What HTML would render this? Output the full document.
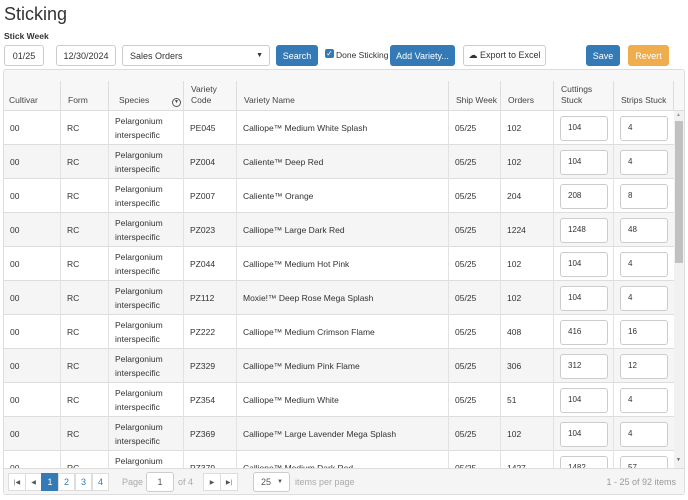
<!DOCTYPE html>
<html><head><style>
*{box-sizing:border-box;margin:0;padding:0}
body{width:688px;height:500px;background:#fff;font-family:"Liberation Sans",sans-serif;color:#333;position:relative;overflow:hidden;font-size:9px}
.a{position:absolute}
.btn{position:absolute;height:21px;border-radius:3px;font-size:9px;display:flex;align-items:center;justify-content:center}
.in{position:absolute;height:21px;border:1px solid #ccc;border-radius:3px;font-size:9px;display:flex;align-items:center}
.grid{position:absolute;left:3px;top:69px;width:682px;height:426px;border:1px solid #ddd;border-radius:3px;overflow:hidden}
.hd{position:absolute;left:0;top:0;width:680px;height:41px;background:#f7f7f7;border-bottom:1px solid #ddd}
.hc{position:absolute;top:11px;height:30px;border-left:1px solid #ddd;padding-left:7px;font-size:8.5px;color:#444;display:flex;align-items:flex-end;padding-bottom:5px;line-height:11px}
.row{position:absolute;left:0;width:670px;height:34px;border-bottom:1px solid #ddd}
.c{position:absolute;top:0;height:34px;border-left:1px solid #e2e2e2;padding-left:6px;display:flex;align-items:center;font-size:8.5px;line-height:14px}
.box{width:48px;height:25px;border:1px solid #ccc;border-radius:3px;background:#fff;font-size:8px;display:flex;align-items:center;padding-left:7px}
.pg{position:absolute;left:0;top:398px;width:680px;height:27px;background:#f5f5f5;border-top:1px solid #ddd}
.pb{position:absolute;top:4px;height:18px;border:1px solid #ddd;background:#fff;font-size:9px;color:#555;display:flex;align-items:center;justify-content:center}
</style></head><body>
<div class="a" style="left:4px;top:4px;font-size:18px;color:#333">Sticking</div>
<div class="a" style="left:4px;top:31px;font-size:8.5px;font-weight:bold">Stick Week</div>
<div class="in" style="left:4px;top:45px;width:40px;justify-content:center">01/25</div>
<div class="in" style="left:56px;top:45px;width:60px;justify-content:center">12/30/2024</div>
<div class="in" style="left:122px;top:45px;width:148px;padding-left:7px">Sales Orders<span style="position:absolute;right:6px;font-size:7px">▼</span></div>
<div class="btn" style="left:276px;top:45px;width:42px;background:#337ab7;color:#fff">Search</div>
<div class="a" style="left:325px;top:49px;width:9px;height:9px;background:#337ab7;border-radius:2px;color:#fff;font-size:8px;line-height:9px;text-align:center">✓</div>
<div class="a" style="left:336px;top:50px;font-size:8.5px">Done Sticking</div>
<div class="btn" style="left:390px;top:45px;width:65px;background:#337ab7;color:#fff">Add Variety...</div>
<div class="btn" style="left:463px;top:45px;width:83px;border:1px solid #ccc;background:#fff;color:#333">☁ Export to Excel</div>
<div class="btn" style="left:586px;top:45px;width:34px;background:#337ab7;color:#fff">Save</div>
<div class="btn" style="left:628px;top:45px;width:41px;background:#f0ad4e;color:#fff">Revert</div>
<div class="grid">
<div class="hd">
<div class="hc" style="left:-1px;width:58px;border-left:none;padding-left:6px">Cultivar</div>
<div class="hc" style="left:56px;width:48px">Form</div>
<div class="hc" style="left:104px;width:75px;padding-left:10px">Species<span style="position:absolute;right:2px;bottom:4px;width:9px;height:9px;border:1px solid #555;border-radius:50%;font-size:5px;line-height:7px;text-align:center">▼</span></div>
<div class="hc" style="left:179px;width:53px">Variety<br>Code</div>
<div class="hc" style="left:232px;width:212px">Variety Name</div>
<div class="hc" style="left:444px;width:52px">Ship Week</div>
<div class="hc" style="left:496px;width:53px">Orders</div>
<div class="hc" style="left:549px;width:60px">Cuttings<br>Stuck</div>
<div class="hc" style="left:609px;width:60px">Strips Stuck</div>
<div class="hc" style="left:669px;width:11px"></div>
</div>
<div id="rows"></div>
<div class="a" style="left:670px;top:41px;width:10px;height:357px;background:#f1f1f1"><div class="a" style="left:1px;top:10px;width:8px;height:142px;background:#c1c1c1"></div><div class="a" style="left:2px;top:346px;font-size:5px;color:#666">▼</div><div class="a" style="left:2px;top:1px;font-size:5px;color:#999">▲</div></div>
<div class="pg">
<div class="pb" style="left:4px;width:18px;font-size:6px">|◀</div>
<div class="pb" style="left:21px;width:17px;font-size:6px">◀</div>
<div class="pb" style="left:37px;width:18px;background:#337ab7;color:#fff;border-color:#337ab7">1</div>
<div class="pb" style="left:54px;width:17px;color:#337ab7">2</div>
<div class="pb" style="left:71px;width:17px;color:#337ab7">3</div>
<div class="pb" style="left:88px;width:17px;color:#337ab7">4</div>
<div class="a" style="left:118px;top:8px;color:#aaa">Page</div>
<div class="pb" style="left:142px;width:28px;top:3px;height:20px;border-color:#ccc;border-radius:3px">1</div>
<div class="a" style="left:174px;top:8px;color:#aaa">of 4</div>
<div class="pb" style="left:199px;width:18px;font-size:6px">▶</div>
<div class="pb" style="left:216px;width:18px;font-size:6px">▶|</div>
<div class="pb" style="left:249px;width:37px;top:3px;height:20px;border-color:#ccc;border-radius:3px;justify-content:flex-start;padding-left:7px">25<span style="position:absolute;right:6px;font-size:6px">▼</span></div>
<div class="a" style="left:291px;top:8px;color:#aaa">items per page</div>
<div class="a" style="right:8px;top:8px;color:#999">1 - 25 of 92 items</div>
</div>
</div>
<script>
var d=[["PE045","Calliope™ Medium White Splash","102","104","4"],["PZ004","Caliente™ Deep Red","102","104","4"],["PZ007","Caliente™ Orange","204","208","8"],["PZ023","Calliope™ Large Dark Red","1224","1248","48"],["PZ044","Calliope™ Medium Hot Pink","102","104","4"],["PZ112","Moxie!™ Deep Rose Mega Splash","102","104","4"],["PZ222","Calliope™ Medium Crimson Flame","408","416","16"],["PZ329","Calliope™ Medium Pink Flame","306","312","12"],["PZ354","Calliope™ Medium White","51","104","4"],["PZ369","Calliope™ Large Lavender Mega Splash","102","104","4"],["PZ379","Calliope™ Medium Dark Red","1427","1482","57"]];
var h="";
d.forEach(function(r,i){
h+='<div class="row" style="top:'+(41+i*34)+'px;background:'+(i%2?'#f5f5f5':'#fff')+'">'+
'<div class="c" style="left:0;width:56px;border-left:none">00</div>'+
'<div class="c" style="left:56px;width:48px">RC</div>'+
'<div class="c" style="left:104px;width:75px">Pelargonium<br>interspecific</div>'+
'<div class="c" style="left:179px;width:53px">'+r[0]+'</div>'+
'<div class="c" style="left:232px;width:212px">'+r[1]+'</div>'+
'<div class="c" style="left:444px;width:52px">05/25</div>'+
'<div class="c" style="left:496px;width:53px">'+r[2]+'</div>'+
'<div class="c" style="left:549px;width:60px"><div class="box">'+r[3]+'</div></div>'+
'<div class="c" style="left:609px;width:61px"><div class="box">'+r[4]+'</div></div></div>';});
document.getElementById("rows").innerHTML=h;
</script>
</body></html>
